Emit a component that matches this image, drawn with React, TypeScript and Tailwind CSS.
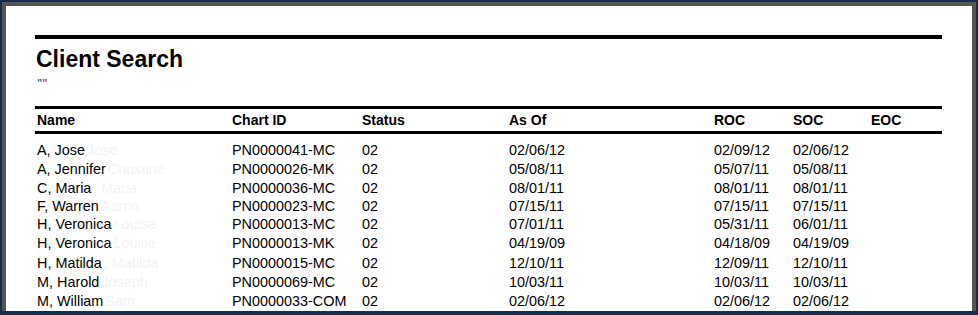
const rows = [
  { name: "A, Jose", last: "Jose", chart: "PN0000041-MC", asOf: "02/06/12", roc: "02/09/12", soc: "02/06/12", h: "h-[18px]" },
  { name: "A, Jennifer", last: "Christine", chart: "PN0000026-MK", asOf: "05/08/11", roc: "05/07/11", soc: "05/08/11", h: "h-[19px]" },
  { name: "C, Maria", last: ", Maria", chart: "PN0000036-MC", asOf: "08/01/11", roc: "08/01/11", soc: "08/01/11", h: "h-[19px]" },
  { name: "F, Warren", last: "Aaron", chart: "PN0000023-MC", asOf: "07/15/11", roc: "07/15/11", soc: "07/15/11", h: "h-[18px]" },
  { name: "H, Veronica", last: "Louise", chart: "PN0000013-MC", asOf: "07/01/11", roc: "05/31/11", soc: "06/01/11", h: "h-[18px]" },
  { name: "H, Veronica", last: "Louise", chart: "PN0000013-MK", asOf: "04/19/09", roc: "04/18/09", soc: "04/19/09", h: "h-[20px]" },
  { name: "H, Matilda", last: ", Matilda", chart: "PN0000015-MC", asOf: "12/10/11", roc: "12/09/11", soc: "12/10/11", h: "h-[20px]" },
  { name: "M, Harold", last: "Joseph", chart: "PN0000069-MC", asOf: "10/03/11", roc: "10/03/11", soc: "10/03/11", h: "h-[18px]" },
  { name: "M, William", last: "Sam", chart: "PN0000033-COM", asOf: "02/06/12", roc: "02/06/12", soc: "02/06/12", h: "h-[19px]" },
];

export default function App() {
  return (
    <div className="w-[978px] h-[315px] bg-[#172d4c] pt-[2px] px-[2px] pb-[4px] overflow-hidden">
      <div className="h-full bg-[#555555] pt-[4px] px-[4px]">
        <div
          className="h-full bg-white pl-[29px] pr-[30px] pt-[29px] text-black"
          style={{ fontFamily: '"Liberation Sans", Arial, sans-serif' }}
        >
          <div className="h-[4px] bg-black" />
          <h1 className="mt-[7px] text-[23px] font-bold leading-[26px] pl-[1px]">Client Search</h1>
          <div className="mt-[6px] pl-[2px] h-[8px] text-[11px] leading-[10px] font-bold">
            <span className="text-[#3a5fd0]">"</span>
            <span className="text-[#c04060]">"</span>
          </div>
          <div className="mt-[20px] h-[3px] bg-black" />
          <div className="flex h-[22px] items-center text-[14px] font-bold leading-[16px] pl-[2px]">
            <div className="w-[195px]">Name</div>
            <div className="w-[130px]">Chart ID</div>
            <div className="w-[147px]">Status</div>
            <div className="w-[205px]">As Of</div>
            <div className="w-[79px]">ROC</div>
            <div className="w-[78px]">SOC</div>
            <div>EOC</div>
          </div>
          <div className="h-[3px] bg-black" />
          <div className="pt-[7px] text-[14.4px] leading-[16px] pl-[2px]">
            {rows.map((r, i) => (
              <div key={i} className={`flex items-center ${r.h}`}>
                <div className="w-[195px] whitespace-nowrap">
                  {r.name}
                  <span className="text-[#f1f3f6] ml-[2px]">{r.last}</span>
                </div>
                <div className="w-[130px]">{r.chart}</div>
                <div className="w-[147px]">02</div>
                <div className="w-[205px]">{r.asOf}</div>
                <div className="w-[79px]">{r.roc}</div>
                <div className="w-[78px]">{r.soc}</div>
                <div />
              </div>
            ))}
          </div>
        </div>
      </div>
    </div>
  );
}
